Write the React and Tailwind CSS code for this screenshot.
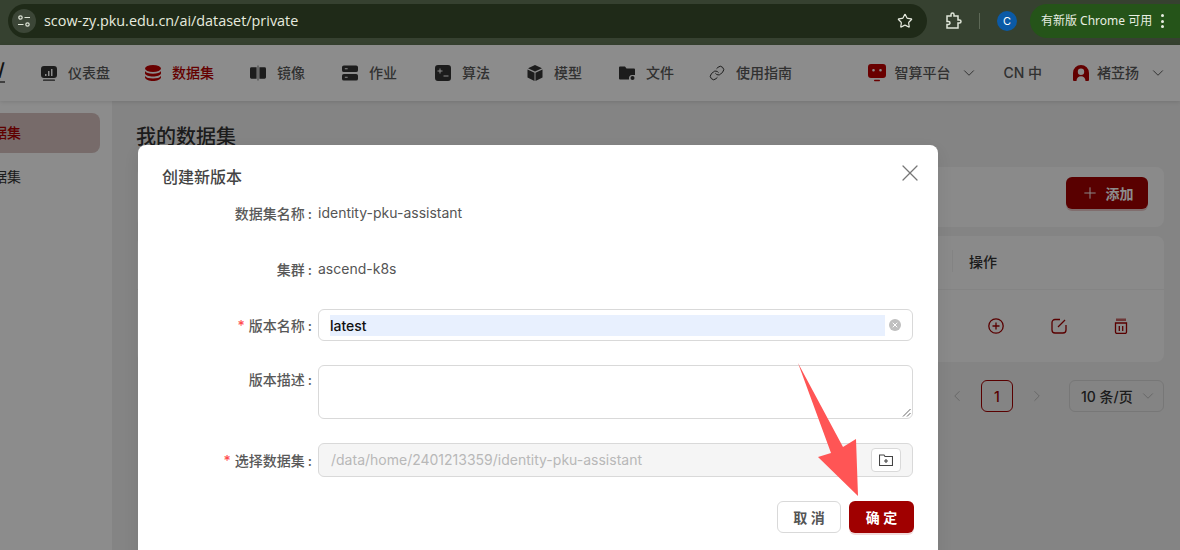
import React from "react";
import { ChevronDown, ChevronLeft, ChevronRight, X, Plus, Link, Star } from "lucide-react";

const FONT = "font-['Inter','Noto_Sans_CJK_SC',sans-serif]";

const I = {
  dash: (
    <svg width="16" height="16" viewBox="0 0 16 16" fill="currentColor">
      <path fillRule="evenodd" d="M3 1h10a3 3 0 0 1 3 3v6a3 3 0 0 1-3 3H3a3 3 0 0 1-3-3V4a3 3 0 0 1 3-3zm1 8h1.500v2H4zm3-3h1.500v5H7zm3-2h1.500v7H10z" />
      <rect x="2" y="14.500" width="12" height="1.300" rx=".6" />
    </svg>
  ),
  db: (
    <svg width="16" height="16" viewBox="0 0 16 16" fill="currentColor">
      <ellipse cx="8" cy="3.500" rx="8" ry="3.500" />
      <path d="M0 6c1 1.800 4 2.700 8 2.700S15 7.800 16 6v2.500c-.6 1.800-4 3-8 3s-7.400-1.200-8-3z" />
      <path d="M0 11c1 1.700 4 2.500 8 2.500s7-.8 8-2.500v1.500c-.6 2-4 3.500-8 3.500s-7.400-1.500-8-3.500z" />
    </svg>
  ),
  mirror: (
    <svg width="17" height="16" viewBox="0 0 17 16" fill="currentColor">
      <path d="M0 3.500A1.500 1.500 0 0 1 1.500 2H7v12H1.500A1.500 1.500 0 0 1 0 12.500z" />
      <path d="M10 2h5.500A1.500 1.500 0 0 1 17 3.500v9a1.500 1.500 0 0 1-1.500 1.500H10z" />
      <rect x="8" y="0" width="1" height="16" opacity=".7" />
    </svg>
  ),
  job: (
    <svg width="17" height="16" viewBox="0 0 17 16" fill="currentColor">
      <path fillRule="evenodd" d="M2 0h13a2 2 0 0 1 2 2v3a2 2 0 0 1-2 2H2a2 2 0 0 1-2-2V2a2 2 0 0 1 2-2zm1 3v1h3V3zM2 9h13a2 2 0 0 1 2 2v3a2 2 0 0 1-2 2H2a2 2 0 0 1-2-2v-3a2 2 0 0 1 2-2zm1 3v1h3v-1z" />
    </svg>
  ),
  algo: (
    <svg width="16" height="16" viewBox="0 0 16 16" fill="currentColor">
      <path fillRule="evenodd" d="M3 0h10a3 3 0 0 1 3 3v10a3 3 0 0 1-3 3H3a3 3 0 0 1-3-3V3a3 3 0 0 1 3-3zm1.500 3.500v2h-2v1h2v2h1v-2h2v-1h-2v-2zM8.500 10.500v1h5v-1z" />
    </svg>
  ),
  cube: (
    <svg width="16" height="16" viewBox="0 0 16 16" fill="currentColor">
      <path d="M8 0l7 3.200L8 6.500 1 3.200z" />
      <path d="M.5 4.500l7 3.300V16l-7-3.500z" />
      <path d="M15.500 4.500l-7 3.300V16l7-3.500z" />
    </svg>
  ),
  folder: (
    <svg width="16" height="16" viewBox="0 0 16 16" fill="currentColor">
      <path d="M0 2.500A1 1 0 0 1 1 1.500h5l1.500 2H15a1 1 0 0 1 1 1V10h-3a3 3 0 0 0-3 3.500V14.500H1a1 1 0 0 1-1-1z" />
      <circle cx="13.500" cy="13" r="2" />
    </svg>
  ),
  robot: (
    <svg width="18" height="18" viewBox="0 0 18 18" fill="currentColor">
      <path fillRule="evenodd" d="M3 0h12a3 3 0 0 1 3 3v8a3 3 0 0 1-3 3H3a3 3 0 0 1-3-3V3a3 3 0 0 1 3-3zm2.500 5a1.300 1.300 0 1 0 0 2.600 1.300 1.300 0 0 0 0-2.600zm7 0a1.300 1.300 0 1 0 0 2.600 1.300 1.300 0 0 0 0-2.600z" />
      <rect x="6" y="15.800" width="6" height="1.500" rx=".7" />
    </svg>
  ),
  user: (
    <svg width="16" height="16" viewBox="0 0 16 16" fill="currentColor">
      <path fillRule="evenodd" d="M8 0a8 8 0 0 1 8 8v7a1 1 0 0 1-1 1H1a1 1 0 0 1-1-1V8a8 8 0 0 1 8-8zm0 3.500a3.200 3.200 0 1 0 0 6.400 3.200 3.200 0 0 0 0-6.400zM3.500 16h9c0-3-2-4.800-4.500-4.800S3.500 13 3.500 16z" />
    </svg>
  ),
};

function NavItem({ icon, label, active, className = "" }) {
  return (
    <div className={`flex items-center gap-[11px] ${className} ${active ? "text-[#c00000]" : "text-[#333333]"}`}>
      <span className="flex w-[16px] justify-center">{icon}</span>
      <span className={`pb-[2px] text-[14px] font-medium ${active ? "text-[#b80000]" : "text-[#595959]"}`}>{label}</span>
    </div>
  );
}

function ChromeBar() {
  return (
    <div className="flex h-[45px] items-start bg-[#364130] pl-[8px] pt-[4px]">
      <div className="flex h-[34px] w-[919px] items-center rounded-full bg-[#1f2a18] pl-[4px] pr-[16px] font-['Open_Sans','Noto_Sans',sans-serif]">
        <span className="flex h-[24px] w-[24px] items-center justify-center rounded-full bg-[#3c4637]">
          <svg width="14" height="14" viewBox="0 0 14 14" fill="none" stroke="#dfe5d8" strokeWidth="1.200">
            <circle cx="3.500" cy="3.500" r="1.700" />
            <path d="M7.500 3.500H13M1 10.500h5.500" />
            <circle cx="10.500" cy="10.500" r="1.700" />
          </svg>
        </span>
        <span className="ml-[8px] text-[14.400px] text-[#e6eadf]">scow-zy.pku.edu.cn/ai/dataset/private</span>
        <Star className="ml-auto -mr-[2px] text-[#e6eadf]" size={16} strokeWidth={1.800} />
      </div>
      <svg className="ml-[18px] mt-[8px] text-[#dfe5d8]" width="18" height="18" viewBox="0 0 18 18" fill="none" stroke="currentColor" strokeWidth="1.500">
        <path d="M2 4h4V2.500a1.500 1.500 0 0 1 3 0V4h4v4h1.500a1.500 1.500 0 0 1 0 3H13v5H2v-3.500h1.500a1.500 1.500 0 0 0 0-3H2z" />
      </svg>
      <span className="ml-[16px] mt-[9px] h-[16px] w-px bg-[#5d6856]" />
      <span className="ml-[17px] mt-[7px] flex h-[20px] w-[20px] items-center justify-center rounded-full bg-[#0b5aa6] text-[11px] text-white">C</span>
      <div className="ml-[13px] flex h-[34px] w-[150px] items-center rounded-l-full bg-[#255419] pl-[11px] text-[12px] text-[#e8eee2] font-['Noto_Sans','Noto_Sans_CJK_SC',sans-serif]">
        有新版 Chrome 可用
        <span className="ml-[9px] flex flex-col gap-[2.500px]">
          <i className="block h-[3px] w-[3px] rounded-full bg-[#e8eee2]" />
          <i className="block h-[3px] w-[3px] rounded-full bg-[#e8eee2]" />
          <i className="block h-[3px] w-[3px] rounded-full bg-[#e8eee2]" />
        </span>
      </div>
    </div>
  );
}

function NavBar() {
  return (
    <div className="relative z-10 flex h-[56px] items-center bg-white shadow-[0_1px_4px_rgba(0,0,0,0.12)]">
      <div className="flex w-[41px] flex-col items-start text-[#222222]">
        <span className="-ml-[2px] -mt-[2px] text-[18px] leading-[18px] font-semibold">/</span>
        <span className="mt-[2px] block h-[2px] w-[5px] bg-[#777777]" />
      </div>
      <div className="flex items-center">
        <NavItem className="w-[104px]" icon={I.dash} label="仪表盘" />
        <NavItem className="w-[105px]" icon={I.db} label="数据集" active />
        <NavItem className="w-[92px]" icon={I.mirror} label="镜像" />
        <NavItem className="w-[93px]" icon={I.job} label="作业" />
        <NavItem className="w-[92px]" icon={I.algo} label="算法" />
        <NavItem className="w-[92px]" icon={I.cube} label="模型" />
        <NavItem className="w-[90px]" icon={I.folder} label="文件" />
        <NavItem icon={<Link size={16} strokeWidth={1.500} />} label="使用指南" />
      </div>
      <div className="ml-auto flex items-center pr-[13px] text-[14px] font-medium text-[#595959]">
        <span className="flex text-[#c00000]">{I.robot}</span>
        <span className="ml-[8px] pb-[2px]">智算平台</span>
        <ChevronDown className="ml-[10px]" size={18} strokeWidth={1.300} />
        <span className="ml-[25px] pb-[2px]">CN 中</span>
        <span className="ml-[31px] flex text-[#b40000]">{I.user}</span>
        <span className="ml-[8px] pb-[2px]">褚苙扬</span>
        <ChevronDown className="ml-[10px]" size={18} strokeWidth={1.300} />
      </div>
    </div>
  );
}

function Sidebar() {
  return (
    <div className="w-[112px] shrink-0 overflow-hidden bg-white pt-[12px] shadow-[2px_0_8px_rgba(0,0,0,0.06)]">
      <div className="-ml-[21px] flex h-[40px] w-[121px] items-center rounded-lg bg-[#d9c4c2] pb-[2px] text-[14px] font-medium text-[#b00000]">数据集</div>
      <div className="-ml-[21px] mt-[4px] flex h-[40px] w-[121px] items-center pb-[2px] text-[14px] text-[#333333]">数据集</div>
    </div>
  );
}

function Content() {
  return (
    <div className="flex-1 bg-[#f0f0f0] pl-[25px] pr-[16px]">
      <div className="-ml-px mt-[22px] h-[28px] text-[20px] leading-[28px] font-medium text-[#333333]">我的数据集</div>
      <div className="mt-[16px] flex h-[60px] items-start justify-end rounded-lg bg-[#fbfbfb] pr-[16px] pt-[10px]">
        <div className="flex h-[32px] w-[82px] items-center justify-center gap-[7px] rounded-md bg-[#a30000] text-[14px] font-bold text-white shadow-[0_2px_0_rgba(163,0,0,0.2)]">
          <Plus size={18} strokeWidth={1.300} /> 添加
        </div>
      </div>
      <div className="mt-[9px] h-[126px] rounded-lg bg-[#fbfbfb]">
        <div className="relative h-[54px] border-b border-[#f0f0f0]">
          <span className="absolute left-[815px] top-[14px] h-[22px] w-px bg-[#eeeeee]" />
          <span className="absolute left-[832px] top-[15px] text-[14px] font-medium text-[#333333]">操作</span>
        </div>
        <div className="relative h-[71px] text-[#a30000]">
          <svg className="absolute left-[851px] top-[28px]" width="16" height="16" viewBox="0 0 16 16" fill="none" stroke="currentColor" strokeWidth="1.300">
            <circle cx="8" cy="8" r="7.200" />
            <path d="M8 4.500v7M4.500 8h7" />
          </svg>
          <svg className="absolute left-[914px] top-[28px]" width="16" height="16" viewBox="0 0 16 16" fill="none" stroke="currentColor" strokeWidth="1.300">
            <path d="M9 1.500H4A3 3 0 0 0 1 4.500v7.500a3 3 0 0 0 3 3h8a3 3 0 0 0 3-3V7" />
            <path d="M7 9l7-7" />
          </svg>
          <svg className="absolute left-[977px] top-[28px]" width="14" height="16" viewBox="0 0 14 16" fill="none" stroke="currentColor" strokeWidth="1.300">
            <path d="M1.500 5h11v9a1.500 1.500 0 0 1-1.500 1.500H3A1.500 1.500 0 0 1 1.500 14zM5.300 8v5M8.700 8v5" />
            <rect x="2" y="0.500" width="10" height="2.500" fill="currentColor" stroke="none" opacity=".6" />
          </svg>
        </div>
      </div>
      <div className="mt-[18px] flex items-center justify-end text-[#333333]">
        <ChevronLeft size={18} strokeWidth={1.300} className="text-[#bbbbbb]" />
        <span className="ml-[15px] flex h-[32px] w-[32px] items-center justify-center rounded-md border border-[#a30000] text-[14px] font-medium text-[#a30000]">1</span>
        <ChevronRight size={18} strokeWidth={1.300} className="ml-[15px] text-[#bbbbbb]" />
        <div className="ml-[23px] flex h-[32px] w-[95px] items-center justify-between rounded-md border border-[#d9d9d9] pl-[11px] pr-[6px] text-[14px] font-medium">
          10 条/页 <ChevronDown size={18} strokeWidth={1.300} className="text-[#bbbbbb]" />
        </div>
      </div>
    </div>
  );
}

function Row({ label, req, top, className = "", children }) {
  return (
    <div className={`flex ${top ? "items-start" : "items-center"} ${className}`}>
      <div className={`w-[156px] shrink-0 whitespace-nowrap pr-[6px] text-right text-[14px] font-medium text-[#595959] ${top ? "pt-[4px]" : ""}`}>
        {req && <span className="mr-[4px] text-[#ff4d4f]">*</span>}
        {label}
        <span className="ml-[3px]">:</span>
      </div>
      {children}
    </div>
  );
}

function Modal() {
  return (
    <div className="absolute left-[138px] top-[145px] z-30 h-[420px] w-[800px] rounded-lg bg-white pl-[24px] pr-[25px] pt-[20px] shadow-[0_6px_16px_rgba(0,0,0,0.08)]">
      <div className="flex h-[24px] items-center justify-between">
        <span className="text-[16px] font-medium text-[#444444]">创建新版本</span>
        <X size={28} strokeWidth={1.100} className="-mr-[11px] -mt-[8px] text-[#777777]" />
      </div>
      <Row label="数据集名称" className="mt-[8px] h-[32px]">
        <span className="-mt-[1px] text-[14px] text-[#555555]">identity-pku-assistant</span>
      </Row>
      <Row label="集群" className="mt-[24px] h-[32px]">
        <span className="-mt-[1px] text-[14px] text-[#555555]">ascend-k8s</span>
      </Row>
      <Row label="版本名称" req className="mt-[24px] h-[32px]">
        <div className="flex h-[32px] flex-1 items-center rounded-md border border-[#d9d9d9] pl-[11px] pr-[11px]">
          <span className="flex h-[21px] flex-1 items-center bg-[#e8f0fe] text-[14px] font-medium text-[#111111]">latest</span>
          <span className="ml-[4px] flex h-[12px] w-[12px] items-center justify-center rounded-full bg-[#bfbfbf] text-white">
            <X size={8} strokeWidth={3} />
          </span>
        </div>
      </Row>
      <Row label="版本描述" top className="mt-[24px]">
        <div className="relative h-[54px] flex-1 rounded-md border border-[#d9d9d9]">
          <svg className="absolute bottom-[1px] right-[1px]" width="9" height="9" viewBox="0 0 9 9" stroke="#666666" strokeWidth="1">
            <path d="M1 8.500L8.500 1M5 8.500L8.500 5" />
          </svg>
        </div>
      </Row>
      <Row label="选择数据集" req className="mt-[24px] h-[34px]">
        <div className="flex h-[34px] flex-1 items-center justify-between rounded-md border border-[#d9d9d9] bg-[#f5f5f5] pl-[12px] pr-[11px] text-[14px] text-[#b8b8b8]">
          <span className="-mt-[1px]">/data/home/2401213359/identity-pku-assistant</span>
          <span className="flex h-[24px] w-[30px] items-center justify-center rounded-[4px] border border-[#d9d9d9] bg-white text-[#444444]">
            <svg width="14" height="12" viewBox="0 0 14 12" fill="none" stroke="currentColor" strokeWidth="1.100">
              <path d="M.5 1h4.500l1 1.500h7.500v9H.5z" />
              <path d="M7 5v4M5 7h4" />
            </svg>
          </span>
        </div>
      </Row>
      <div className="-mr-px mt-[24px] flex justify-end gap-[8px]">
        <div className="flex h-[32px] w-[64px] items-center justify-center rounded-md border border-[#d9d9d9] text-[14px] font-bold text-[#555555]">取 消</div>
        <div className="flex h-[32px] w-[65px] items-center justify-center rounded-md bg-[#a00000] text-[14px] font-bold text-white shadow-[0_2px_0_rgba(160,0,0,0.15)]">确 定</div>
      </div>
    </div>
  );
}

export default function App() {
  return (
    <div className={`relative h-[550px] w-[1180px] overflow-hidden bg-white ${FONT}`}>
      <ChromeBar />
      <NavBar />
      <div className="flex h-[449px]">
        <Sidebar />
        <Content />
      </div>
      <div className="absolute inset-x-0 bottom-0 top-[45px] z-20 bg-black/45" />
      <Modal />
      <svg className="absolute left-[790px] top-[355px] z-40" width="80" height="150" viewBox="790 355 80 150">
        <polygon points="798,363 843,447 856,439 858,496 818,457 831,453" fill="#ff5555" />
      </svg>
    </div>
  );
}
